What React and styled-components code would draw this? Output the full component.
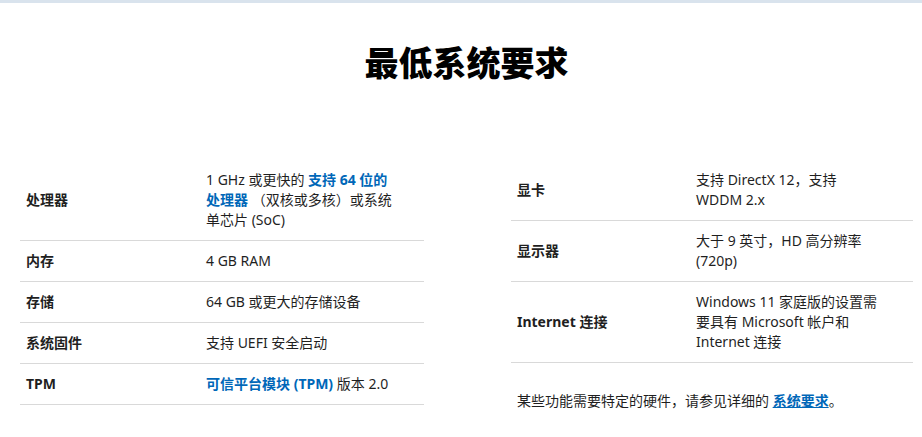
import React from 'react';
import styled, { createGlobalStyle } from 'styled-components';

const GlobalStyle = createGlobalStyle`
  html, body {
    margin: 0;
    padding: 0;
    background: #fff;
  }
  body {
    font-family: "Noto Sans", "Noto Sans CJK SC", sans-serif;
    color: #1f1f1f;
    font-size: 14px;
    line-height: 20px;
  }
`;

const TopBar = styled.div`
  height: 3px;
  background: #d9e3ed;
`;

const Section = styled.section`
  padding: 37px 0 0 20px;
  width: 893px;
`;

const Title = styled.h1`
  margin: 0;
  text-align: center;
  font-family: "Noto Sans CJK SC", sans-serif;
  font-size: 34px;
  line-height: 44px;
  font-weight: 900;
  color: #000;
`;

const Columns = styled.div`
  display: grid;
  grid-template-columns: 404px 402px;
  column-gap: 87px;
  margin-top: 76px;
  align-items: start;
`;

const SpecTable = styled.div`
  display: flex;
  flex-direction: column;
`;

const Row = styled.div`
  display: flex;
  align-items: center;
  border-bottom: 1px solid #d9d9d9;
`;

const Label = styled.div`
  box-sizing: border-box;
  width: ${(p) => p.$w || 186}px;
  flex: none;
  padding: 10px 6px;
  font-weight: 700;
`;

const Value = styled.div`
  width: 190px;
  padding: 10px 0;
`;

const Strong = styled.a`
  color: #0067b8;
  font-weight: 700;
  text-decoration: none;
`;

const Note = styled.p`
  margin: 28px 0 0;
  padding-left: 6px;
`;

const NoteLink = styled.a`
  color: #0067b8;
  font-weight: 700;
  text-decoration: underline;
`;

const left = [
  {
    label: '处理器',
    value: (
      <>
        1 GHz 或更快的 <Strong>支持 64 位的处理器</Strong> （双核或多核）或系统单芯片 (SoC)
      </>
    ),
  },
  { label: '内存', value: '4 GB RAM' },
  { label: '存储', value: '64 GB 或更大的存储设备' },
  { label: '系统固件', value: '支持 UEFI 安全启动' },
  {
    label: 'TPM',
    value: (
      <>
        <Strong>可信平台模块 (TPM)</Strong> 版本 2.0
      </>
    ),
  },
];

const right = [
  { label: '显卡', value: '支持 DirectX 12，支持 WDDM 2.x' },
  { label: '显示器', value: '大于 9 英寸，HD 高分辨率 (720p)' },
  { label: 'Internet 连接', value: 'Windows 11 家庭版的设置需要具有 Microsoft 帐户和 Internet 连接' },
];

const Specs = ({ rows, labelWidth }) => (
  <SpecTable>
    {rows.map((r) => (
      <Row key={r.label}>
        <Label $w={labelWidth}>{r.label}</Label>
        <Value>{r.value}</Value>
      </Row>
    ))}
  </SpecTable>
);

const App = () => (
  <>
    <GlobalStyle />
    <TopBar />
    <Section>
      <Title>最低系统要求</Title>
      <Columns>
        <Specs rows={left} labelWidth={186} />
        <div>
          <Specs rows={right} labelWidth={185} />
          <Note>
            某些功能需要特定的硬件，请参见详细的 <NoteLink>系统要求</NoteLink>。
          </Note>
        </div>
      </Columns>
    </Section>
  </>
);

export default App;
